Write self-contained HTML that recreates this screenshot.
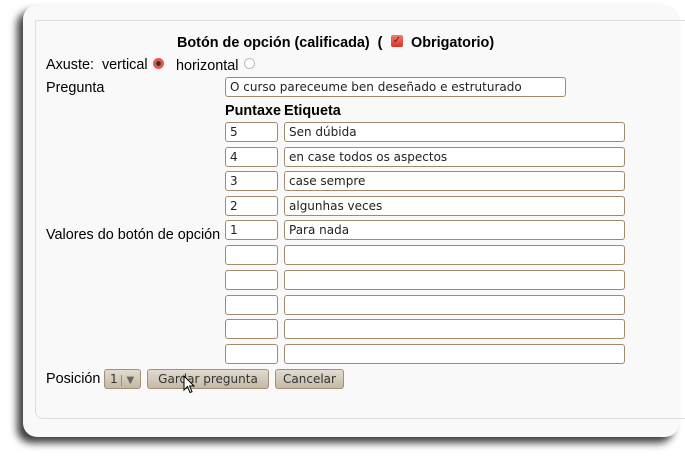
<!DOCTYPE html><html><head><meta charset="utf-8"><style>
body{margin:0;width:685px;height:460px;background:#fff;position:relative;overflow:hidden;font-family:"Liberation Sans",sans-serif;font-size:14.4px;color:#000}
.win{position:absolute;left:23px;top:5px;width:656px;height:432px;background:#f9f9f9;border-radius:14px;box-shadow:-6px 6px 8px rgba(0,0,0,.75)}
.inner{position:absolute;left:35px;top:20px;width:660px;height:397px;border:1px solid #ddd;border-radius:0 0 0 8px;border-right:none}
.t{position:absolute;white-space:nowrap}
.in{position:absolute;box-sizing:border-box;height:20px;background:#fff;border:1px solid #a08c6c;border-radius:3px;font-family:"DejaVu Sans",sans-serif;font-size:12px;padding:2px 0 0 4px;color:#222}
.btn{position:absolute;box-sizing:border-box;height:20px;top:369px;border:1px solid #a09078;border-radius:3px;background:linear-gradient(#e2dccf,#c3b8a5);font-family:"DejaVu Sans",sans-serif;font-size:12px;color:#333;text-align:center;padding-top:2px}
.radio{position:absolute;width:11px;height:11px;border-radius:50%;box-sizing:border-box}
</style></head><body>
<div class="win"></div><div class="inner"></div>
<div class="t" style="left:177px;top:35px;font-weight:bold">Botón de opción (calificada)&nbsp; (</div>
<div style="position:absolute;left:391px;top:35px;width:12px;height:12px;border-radius:2px;background:linear-gradient(#f47a6a,#d8322a);color:#333;font-size:10px;line-height:12px;text-align:center">✓</div>
<div class="t" style="left:411px;top:35px;font-weight:bold">Obrigatorio)</div>
<div class="t" style="left:46px;top:57px">Axuste:&nbsp; vertical</div>
<div class="radio" style="left:153px;top:58px;background:radial-gradient(#333 0 2px,#f06050 3px,#e04030)"></div>
<div class="t" style="left:176px;top:58px">horizontal</div>
<div class="radio" style="left:244px;top:58px;border:1px solid #bbb;background:#fff"></div>
<div class="t" style="left:46px;top:80px">Pregunta</div>
<div class="in" style="left:225px;top:77px;width:341px">O curso pareceume ben deseñado e estruturado</div>
<div class="t" style="left:225px;top:103px;font-weight:bold">Puntaxe</div>
<div class="t" style="left:284px;top:103px;font-weight:bold">Etiqueta</div>
<div class="t" style="left:46px;top:227px">Valores do botón de opción</div>
<div class="in" style="left:225px;top:122px;width:53px">5</div><div class="in" style="left:284px;top:122px;width:341px">Sen dúbida</div>
<div class="in" style="left:225px;top:147px;width:53px">4</div><div class="in" style="left:284px;top:147px;width:341px">en case todos os aspectos</div>
<div class="in" style="left:225px;top:171px;width:53px">3</div><div class="in" style="left:284px;top:171px;width:341px">case sempre</div>
<div class="in" style="left:225px;top:196px;width:53px">2</div><div class="in" style="left:284px;top:196px;width:341px">algunhas veces</div>
<div class="in" style="left:225px;top:220px;width:53px">1</div><div class="in" style="left:284px;top:220px;width:341px">Para nada</div>
<div class="in" style="left:225px;top:245px;width:53px"></div><div class="in" style="left:284px;top:245px;width:341px"></div>
<div class="in" style="left:225px;top:270px;width:53px"></div><div class="in" style="left:284px;top:270px;width:341px"></div>
<div class="in" style="left:225px;top:295px;width:53px"></div><div class="in" style="left:284px;top:295px;width:341px"></div>
<div class="in" style="left:225px;top:319px;width:53px"></div><div class="in" style="left:284px;top:319px;width:341px"></div>
<div class="in" style="left:225px;top:344px;width:53px"></div><div class="in" style="left:284px;top:344px;width:341px"></div>
<div class="t" style="left:46px;top:371px">Posición</div>
<div class="btn" style="left:104px;width:37px;text-align:left;padding-left:5px">1 <span style="color:#666;font-size:10px;border-left:1px solid #a09078;padding-left:4px">▼</span></div>
<div class="btn" style="left:147px;width:122px">Gardar pregunta</div>
<div class="btn" style="left:275px;width:69px">Cancelar</div>
<svg style="position:absolute;left:183px;top:375px" width="12" height="19" viewBox="0 0 12 19"><path d="M1 1 L1 15 L4.5 11.5 L7 17.5 L9 16.7 L6.6 11 L11 11 Z" fill="#fff" stroke="#000" stroke-width="1"/></svg>
</body></html>
